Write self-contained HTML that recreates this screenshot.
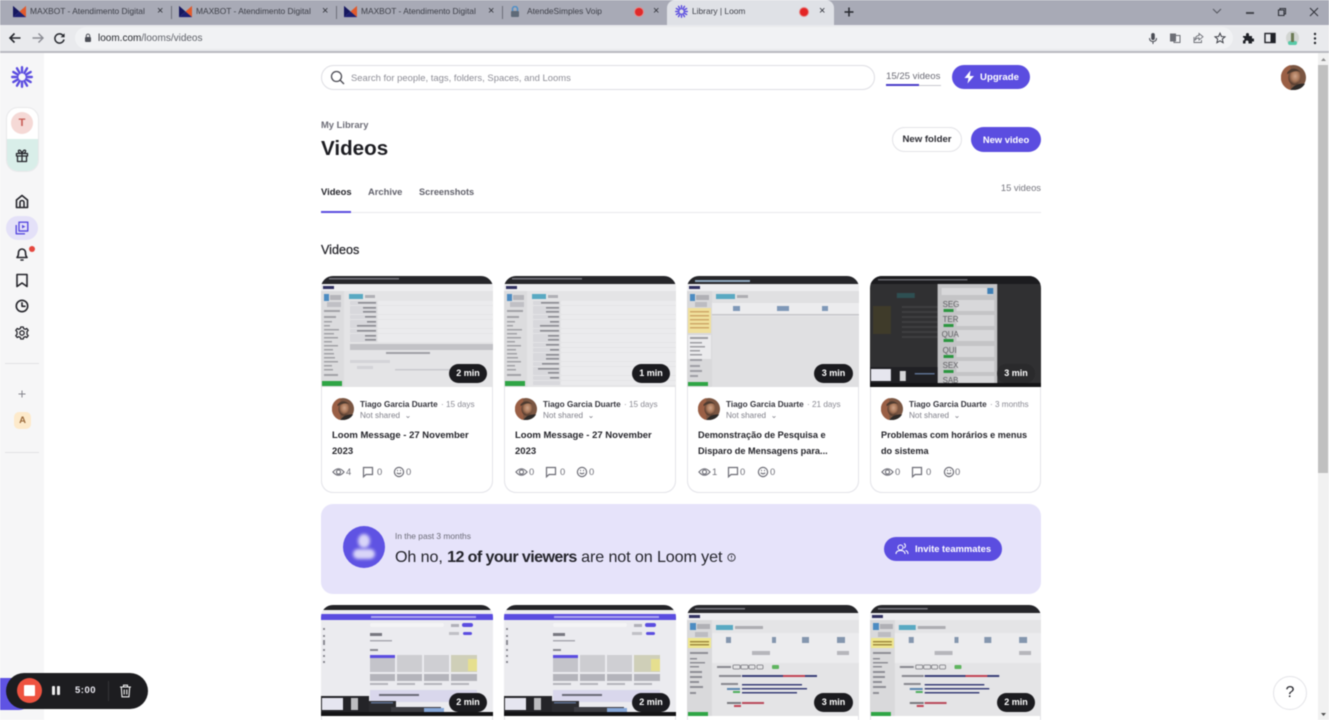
<!DOCTYPE html>
<html><head><meta charset="utf-8"><title>Library | Loom</title>
<style>
*{box-sizing:border-box}
html,body{margin:0;padding:0;width:1329px;height:720px;overflow:hidden;background:#fff;font-family:"Liberation Sans",sans-serif;color:#26262c}
#root{position:absolute;left:0;top:0;width:1329px;height:720px;overflow:hidden;background:#fff;filter:blur(.4px)}
.a{position:absolute}
.t{position:absolute;white-space:nowrap;line-height:14px}
.tab{font-size:8.4px;color:#3d3f48;top:4px}
.x{font-size:11px;color:#30323a;top:4px}
.sep{position:absolute;top:6px;width:1px;height:13px;background:#6d6f7a}
.card{position:absolute;width:172px;height:217px;border:1px solid #e3e3e8;border-radius:12px;background:#fff}
.card.r2{height:115px;border-bottom:0;border-radius:12px 12px 0 0}
.th{position:absolute;left:-1px;top:-1px;width:172px;height:111px;display:block;clip-path:inset(0 round 12px 12px 0 0)}
.dur{position:absolute;top:87px;height:19px;border-radius:10px;background:#1b1b1f;color:#fff;font-weight:bold;font-size:9px;line-height:19px;text-align:center}
.av{position:absolute;left:10px;top:121px;width:22px;height:22px}
.nm{position:absolute;left:38px;top:122px;font-size:8.2px;line-height:12px;font-weight:bold;color:#34343c;white-space:nowrap}
.nm span{font-weight:normal;color:#8a8a93;margin-left:1px}
.ns{position:absolute;left:38px;top:133px;font-size:8.2px;line-height:12px;color:#80808a;white-space:nowrap}
.ti{position:absolute;left:10px;top:151px;width:160px;font-size:9.5px;line-height:16px;font-weight:bold;color:#26262c;white-space:nowrap}
.ti.s{font-size:9.2px;top:150px}
.st{position:absolute;top:189px;font-size:9.4px;line-height:12px;color:#6d6d76}
.ic{position:absolute;top:189px;width:12px;height:12px;fill:none;stroke:#6d6d76;stroke-width:1.2}
.btn{position:absolute;border-radius:13px;background:#5b4de0;color:#fff;font-weight:bold;text-align:center}
.side{fill:none;stroke:#26262c;stroke-width:1.6;stroke-linecap:round;stroke-linejoin:round}
</style></head><body>
<svg width="0" height="0" style="position:absolute">
<defs>
<radialGradient id="fc" cx=".55" cy=".42" r=".55"><stop offset="0" stop-color="#d0a58b"/><stop offset=".55" stop-color="#a9785a"/><stop offset="1" stop-color="#5a3d30"/></radialGradient>
<symbol id="avatar" viewBox="0 0 24 24"><circle cx="12" cy="12" r="12" fill="#7b5642"/><path d="M0 12A12 12 0 0 1 9 0L9 24A12 12 0 0 1 0 12Z" fill="#9a5f45"/><ellipse cx="13" cy="12" rx="6" ry="7.5" fill="url(#fc)"/><path d="M6 7Q12 0 19 7Q14 4 6 9Z" fill="#4e3b30"/><path d="M9 24Q14 17 23 18A12 12 0 0 1 12 24Z" fill="#2e2a28"/><path d="M10 16Q13 20 16 16L15 19H11Z" fill="#5d4334"/></symbol>
<symbol id="maxbot" viewBox="0 0 14 14"><path d="M0 1L7 7 0 13Z" fill="#16185f"/><path d="M14 1L7 7 14 13Z" fill="#e25a2b"/><path d="M7 7L14 13H0Z" fill="#1d1f70"/></symbol>
<symbol id="loom" viewBox="0 0 24 24"><path stroke="#5b4de0" stroke-width="2.6" stroke-linecap="round" d="M12 1.3V7M17.5 2.5L14.5 7.7M21.5 6.5L16.3 9.5M22.7 12H17M21.5 17.5L16.3 14.5M17.5 21.5L14.5 16.3M12 22.7V17M6.5 21.5L9.5 16.3M2.5 17.5L7.7 14.5M1.3 12H7M2.5 6.5L7.7 9.5M6.5 2.5L9.5 7.7"/></symbol>
<symbol id="eye" viewBox="0 0 14 12"><path d="M1 6Q7 -1 13 6Q7 13 1 6Z"/><circle cx="7" cy="6" r="2.2"/></symbol>
<symbol id="cm" viewBox="0 0 12 12"><path d="M1.5 1.5H10.5V8.5H4L1.5 10.8Z"/></symbol>
<symbol id="sm" viewBox="0 0 12 12"><circle cx="6" cy="6" r="4.6"/><path d="M3.8 6.8Q6 8.8 8.2 6.8M4 4.5H5M7 4.5H8"/></symbol>
<symbol id="thA" viewBox="0 0 172 111" preserveAspectRatio="none">
<rect width="172" height="111" fill="#e4e4e6"/><rect width="172" height="8" fill="#26262a"/><rect x="8" y="2" width="70" height="1.5" fill="#77777e"/><rect y="8" width="172" height="7" fill="#eeeef0"/><rect x="2" y="10" width="11" height="3" fill="#303060"/>
<rect y="15" width="23" height="96" fill="#dcdcde"/><rect x="3" y="18" width="5" height="7" fill="#4d8cc2"/><rect x="9" y="19" width="11" height="5" fill="#b5b5ba"/><rect x="6" y="26" width="14" height="5" fill="#c0c0c5"/>
<g fill="#a2a2a7"><rect x="3" y="34" width="16" height="2"/><rect x="3" y="40" width="12" height="2"/><rect x="3" y="45" width="8" height="1.5"/><rect x="3" y="49" width="6" height="1.5"/><rect x="3" y="53" width="15" height="1.5"/><rect x="3" y="57" width="10" height="1.5"/><rect x="3" y="61" width="14" height="1.5"/><rect x="3" y="65" width="8" height="1.5"/><rect x="3" y="69" width="14" height="1.5"/><rect x="3" y="73" width="9" height="1.5"/><rect x="3" y="77" width="10" height="1.5"/><rect x="3" y="81" width="11" height="1.5"/><rect x="3" y="85" width="14" height="1.5"/><rect x="3" y="89" width="8" height="1.5"/><rect x="3" y="93" width="9" height="1.5"/><rect x="3" y="98" width="14" height="2"/></g>
<rect x="1" y="105" width="20" height="5" fill="#2fa545"/>
<rect x="28" y="18" width="14" height="5" fill="#59a9c2"/><rect x="44" y="19" width="10" height="3" fill="#b0b0b5"/>
<g fill="#d8d8dc"><rect x="29" y="25" width="27" height="4"/><rect x="29" y="30" width="27" height="4"/><rect x="29" y="34" width="27" height="4"/><rect x="29" y="39" width="27" height="4"/><rect x="29" y="44" width="27" height="4"/><rect x="29" y="48" width="27" height="4"/><rect x="29" y="53" width="27" height="4"/><rect x="29" y="58" width="27" height="4"/><rect x="29" y="62" width="27" height="4"/></g>
<g fill="#8c8c92"><rect x="37" y="26" width="18" height="1.6"/><rect x="42" y="31" width="13" height="1.6"/><rect x="42" y="35" width="13" height="1.6"/><rect x="44" y="40" width="11" height="1.6"/><rect x="46" y="45" width="9" height="1.6"/><rect x="36" y="49" width="19" height="1.6"/><rect x="36" y="54" width="19" height="1.6"/><rect x="44" y="59" width="11" height="1.6"/><rect x="44" y="63" width="11" height="1.6"/></g>
<g fill="#ebebed"><rect x="57" y="25" width="115" height="4"/><rect x="57" y="30" width="115" height="4"/><rect x="57" y="34" width="115" height="4"/><rect x="57" y="39" width="115" height="4"/><rect x="57" y="44" width="115" height="4"/><rect x="57" y="48" width="115" height="4"/><rect x="57" y="53" width="115" height="4"/><rect x="57" y="58" width="115" height="4"/><rect x="57" y="62" width="115" height="4"/></g>
<rect x="29" y="68" width="143" height="6" fill="#c2c2c6"/><rect x="65" y="76" width="44" height="2" fill="#a0a0a6"/><rect x="29" y="84" width="40" height="3" fill="#d4d4d8"/><rect x="36" y="90" width="16" height="3" fill="#d3d3d7"/><rect x="74" y="93" width="60" height="1.5" fill="#cacace"/>
</symbol>
<symbol id="thA2" viewBox="0 0 172 111" preserveAspectRatio="none">
<use href="#thA" width="172" height="111"/>
<rect x="23" y="67" width="149" height="44" fill="#e4e4e6"/>
<g fill="#d8d8dc"><rect x="29" y="67" width="27" height="4"/><rect x="29" y="72" width="27" height="4"/><rect x="29" y="77" width="27" height="4"/><rect x="29" y="81" width="27" height="4"/><rect x="29" y="86" width="27" height="4"/><rect x="29" y="91" width="27" height="4"/><rect x="29" y="95" width="27" height="4"/><rect x="29" y="100" width="27" height="4"/><rect x="29" y="105" width="27" height="4"/></g>
<g fill="#ebebed"><rect x="57" y="67" width="115" height="4"/><rect x="57" y="72" width="115" height="4"/><rect x="57" y="77" width="115" height="4"/><rect x="57" y="81" width="115" height="4"/><rect x="57" y="86" width="115" height="4"/><rect x="57" y="91" width="115" height="4"/><rect x="57" y="95" width="115" height="4"/><rect x="57" y="100" width="115" height="4"/><rect x="57" y="105" width="115" height="4"/></g>
<g fill="#8c8c92"><rect x="42" y="68" width="13" height="1.6"/><rect x="46" y="73" width="9" height="1.6"/><rect x="42" y="78" width="13" height="1.6"/><rect x="42" y="82" width="13" height="1.6"/><rect x="38" y="87" width="17" height="1.6"/><rect x="34" y="92" width="21" height="1.6"/><rect x="44" y="96" width="11" height="1.6"/><rect x="46" y="101" width="9" height="1.6"/></g>
</symbol>
<symbol id="thB" viewBox="0 0 172 111" preserveAspectRatio="none">
<rect width="172" height="111" fill="#e0e0e2"/><rect width="172" height="8" fill="#26262a"/><rect x="8" y="4" width="55" height="2" fill="#8fa8c0"/><rect y="8" width="172" height="7" fill="#eeeef0"/><rect x="2" y="10" width="11" height="3" fill="#303060"/>
<rect y="15" width="25" height="96" fill="#d9d9db"/><rect x="3" y="18" width="5" height="7" fill="#4d8cc2"/><rect x="9" y="19" width="13" height="5" fill="#b0b0b5"/><rect x="8" y="26" width="12" height="5" fill="#bcbcc1"/>
<rect x="1" y="32" width="23" height="25" fill="#f0e09c"/><g fill="#cfa968"><rect x="3" y="35" width="19" height="1.5"/><rect x="3" y="39" width="19" height="1.5"/><rect x="3" y="43" width="19" height="1.5"/><rect x="3" y="47" width="19" height="1.5"/><rect x="3" y="51" width="19" height="1.5"/></g>
<rect x="1" y="59" width="23" height="24" fill="#ebebed"/><g fill="#9e9ea4"><rect x="3" y="61" width="18" height="2"/><rect x="3" y="66" width="12" height="1.5"/><rect x="3" y="70" width="15" height="1.5"/><rect x="3" y="74" width="10" height="1.5"/><rect x="3" y="78" width="12" height="1.5"/><rect x="3" y="83" width="12" height="2"/><rect x="3" y="89" width="10" height="2"/><rect x="3" y="94" width="12" height="2"/><rect x="3" y="99" width="8" height="2"/></g>
<rect x="1" y="106" width="20" height="4" fill="#2fa545"/>
<rect x="29" y="18" width="19" height="5" fill="#59a9c2"/><rect x="50" y="19" width="11" height="3" fill="#adadb2"/>
<rect x="25" y="27" width="147" height="13" fill="#ececee"/><rect x="25" y="38" width="147" height="1.5" fill="#c6c6ca"/>
<g fill="#7f98b8"><rect x="46" y="30" width="7" height="5"/><rect x="90" y="30" width="12" height="5"/><rect x="135" y="30" width="6" height="5"/></g>
</symbol>
<symbol id="thC" viewBox="0 0 172 111" preserveAspectRatio="none">
<rect width="172" height="111" fill="#303032"/><rect width="172" height="8" fill="#1c1c1f"/><rect x="8" y="3" width="90" height="1.5" fill="#65656b"/>
<rect x="27" y="17" width="18" height="5" fill="#2e4f52"/>
<rect x="3" y="30" width="18" height="28" fill="#3f3b2a"/>
<g fill="#3e3e40"><rect x="32" y="30" width="36" height="2"/><rect x="32" y="35" width="36" height="2"/><rect x="32" y="40" width="36" height="2"/><rect x="32" y="45" width="36" height="2"/><rect x="32" y="50" width="36" height="2"/><rect x="32" y="55" width="36" height="2"/><rect x="32" y="60" width="36" height="2"/></g>
<rect x="68" y="8" width="60" height="103" fill="#c4c4c6"/><rect x="72" y="12" width="52" height="7" fill="#d8d8da"/><rect x="118" y="12" width="6" height="6" fill="#3f7fb5"/>
<g fill="#d8d8da"><rect x="87" y="24" width="38" height="11"/><rect x="87" y="39" width="38" height="11"/><rect x="87" y="54" width="38" height="11"/><rect x="87" y="70" width="38" height="11"/><rect x="87" y="85" width="38" height="11"/><rect x="87" y="100" width="38" height="10"/></g>
<g font-family="Liberation Sans,sans-serif" font-size="8" fill="#606064"><text x="73" y="31">SEG</text><text x="73" y="46">TER</text><text x="72" y="61">QUA</text><text x="73" y="77">QUI</text><text x="73" y="92">SEX</text><text x="73" y="107">SAB</text></g>
<g fill="#2b9640"><rect x="74" y="33" width="10" height="3"/><rect x="74" y="48" width="10" height="3"/><rect x="74" y="63" width="10" height="3"/><rect x="74" y="79" width="10" height="3"/><rect x="74" y="94" width="10" height="3"/></g>
<rect y="91" width="68" height="16" fill="#202024"/><rect x="1" y="93" width="20" height="12" fill="#e6e6ee"/><rect x="30" y="95" width="6" height="10" fill="#d6d6d8"/><rect x="45" y="97" width="20" height="1.5" fill="#5c6f90"/>
<rect y="107" width="172" height="4" fill="#141416"/>
</symbol>
<symbol id="thD" viewBox="0 0 172 111" preserveAspectRatio="none">
<rect width="172" height="111" fill="#ebebef"/><rect width="172" height="5" fill="#232327"/><rect y="5" width="172" height="4" fill="#eeeef0"/><rect y="9" width="172" height="6" fill="#5b4de0"/><rect x="50" y="11" width="105" height="2" fill="#aaa4ee"/>
<rect x="49" y="18" width="74" height="4" rx="2" fill="#f4f4f6"/><rect x="130" y="19" width="8" height="3" fill="#b0b0b8"/><rect x="141" y="18" width="11" height="4" rx="2" fill="#5b4de0"/><rect x="142" y="27" width="9" height="3" rx="1.5" fill="#5b4de0"/><rect x="128" y="27" width="10" height="3" fill="#c0c0c6"/>
<rect x="49" y="28" width="12" height="3" fill="#777780"/><rect x="49" y="35" width="22" height="1.5" fill="#aaaab2"/><rect x="49" y="44" width="8" height="2" fill="#8a8a92"/>
<g fill="#8b8b92"><rect x="2" y="23" width="2" height="2"/><rect x="2" y="30" width="2" height="2"/><rect x="2" y="35" width="2" height="5"/><rect x="2" y="44" width="2" height="2"/><rect x="2" y="50" width="2" height="2"/><rect x="2" y="56" width="2" height="2"/></g>
<rect x="49" y="50" width="25" height="17" fill="#c4c4ca"/><rect x="76" y="50" width="25" height="17" fill="#cdcdd1"/><rect x="103" y="50" width="25" height="17" fill="#cfcfd3"/><rect x="130" y="50" width="26" height="17" fill="#cfcfb8"/><rect x="49" y="50" width="25" height="3" fill="#5b4de0"/><rect x="147" y="54" width="9" height="12" fill="#e6df8f"/>
<g fill="#b4b4bb"><rect x="49" y="69" width="25" height="7"/><rect x="76" y="69" width="25" height="7"/><rect x="103" y="69" width="25" height="7"/><rect x="130" y="69" width="26" height="7"/><rect x="49" y="78" width="18" height="2"/><rect x="76" y="78" width="18" height="2"/><rect x="103" y="78" width="18" height="2"/><rect x="130" y="78" width="18" height="2"/></g>
<rect x="49" y="85" width="107" height="12" fill="#d9d7ec"/><rect x="58" y="89" width="40" height="2" fill="#6c6c78"/>
<rect y="91" width="48" height="20" fill="#242428"/><rect x="48" y="96" width="27" height="15" fill="#2b2b2f"/><rect x="1" y="93" width="21" height="12" fill="#e6e6f0"/><rect x="30" y="93" width="7" height="12" fill="#bdbdc0"/><rect x="50" y="97" width="22" height="1.5" fill="#5c6f90"/>
<rect x="70" y="102" width="50" height="6" fill="#3c3c42"/><rect x="103" y="103" width="20" height="4" fill="#86a7d8"/><rect y="107" width="172" height="4" fill="#141416"/>
</symbol>
<symbol id="thE" viewBox="0 0 172 111" preserveAspectRatio="none">
<rect width="172" height="111" fill="#e4e4e6"/><rect width="172" height="8" fill="#26262a"/><rect x="8" y="3" width="50" height="1.5" fill="#77777e"/><rect y="8" width="172" height="7" fill="#eeeef0"/><rect x="2" y="10" width="11" height="3" fill="#303060"/>
<rect y="15" width="25" height="96" fill="#d9d9db"/><rect x="3" y="18" width="6" height="7" fill="#4d8cc2"/><rect x="10" y="19" width="13" height="5" fill="#b0b0b5"/><rect x="8" y="27" width="13" height="5" fill="#bcbcc1"/><rect x="1" y="33" width="23" height="10" fill="#efe68f"/><rect x="3" y="36" width="19" height="1.5" fill="#a08c40"/><rect x="3" y="39" width="19" height="1.5" fill="#a08c40"/>
<g fill="#8e8e95"><rect x="3" y="47" width="18" height="2"/><rect x="3" y="53" width="7" height="1.5"/><rect x="3" y="57" width="15" height="1.5"/><rect x="3" y="61" width="9" height="1.5"/><rect x="3" y="66" width="12" height="2"/><rect x="3" y="71" width="12" height="2"/><rect x="3" y="76" width="9" height="2"/><rect x="3" y="81" width="13" height="2"/><rect x="3" y="87" width="6" height="2"/></g>
<rect x="1" y="107" width="20" height="4" fill="#2fa545"/>
<rect x="29" y="20" width="17" height="5" fill="#59a9c2"/><rect x="48" y="21" width="28" height="3" fill="#adadb2"/>
<rect x="25" y="28" width="147" height="30" fill="#ececee"/>
<g fill="#8496ae"><rect x="39" y="32" width="5" height="6"/><rect x="85" y="32" width="4" height="6"/><rect x="115" y="32" width="7" height="6"/><rect x="150" y="32" width="8" height="6"/></g>
<rect x="65" y="46" width="18" height="4" fill="#b6b6bb"/><rect x="150" y="46" width="12" height="4" fill="#b6b6bb"/>
<g fill="none" stroke="#77777d" stroke-width=".8"><rect x="46" y="60" width="7" height="4" rx="1"/><rect x="54" y="60" width="7" height="4" rx="1"/><rect x="62" y="60" width="6" height="4" rx="1"/><rect x="70" y="60" width="6" height="4" rx="1"/></g><rect x="85" y="60" width="7" height="4" rx="1" fill="#5fb45f"/><rect x="30" y="61" width="14" height="2" fill="#8a8a90"/>
<g fill="#3a3f78"><rect x="55" y="70" width="75" height="2"/><rect x="55" y="79" width="60" height="1.5"/><rect x="55" y="83" width="65" height="1.5"/><rect x="55" y="87" width="55" height="1.5"/></g><rect x="96" y="70" width="22" height="2" fill="#c24455"/>
<g fill="#888890"><rect x="32" y="70" width="22" height="2"/><rect x="34" y="78" width="17" height="2"/></g><rect x="40" y="83" width="13" height="2" fill="#5d86b0"/><rect x="46" y="86" width="7" height="2" fill="#4fae5e"/>
<rect x="40" y="97" width="14" height="2" fill="#7a7a80"/><rect x="47" y="100" width="7" height="2" fill="#c24455"/><rect x="55" y="97" width="22" height="2" fill="#b94a5a"/>
</symbol>
</defs></svg>

<div id="root">
<!-- Tab bar -->
<div class="a" style="left:0;top:0;width:1329px;height:25px;background:#a8aab6"></div>
<svg class="a" style="left:13px;top:5px" width="13" height="13"><use href="#maxbot"/></svg><div class="t tab" style="left:30px">MAXBOT - Atendimento Digital</div><div class="t x" style="left:157px">×</div><div class="sep" style="left:171px"></div>
<svg class="a" style="left:179px;top:5px" width="13" height="13"><use href="#maxbot"/></svg><div class="t tab" style="left:196px">MAXBOT - Atendimento Digital</div><div class="t x" style="left:322px">×</div><div class="sep" style="left:336px"></div>
<svg class="a" style="left:344px;top:5px" width="13" height="13"><use href="#maxbot"/></svg><div class="t tab" style="left:361px">MAXBOT - Atendimento Digital</div><div class="t x" style="left:488px">×</div><div class="sep" style="left:502px"></div>
<svg class="a" style="left:510px;top:6px" width="10" height="12"><rect x="1" y="5" width="8" height="6" rx="1" fill="#5e6a78"/><path d="M2.5 5V3a2.5 2.5 0 0 1 5 0V5" fill="none" stroke="#4e8fc7" stroke-width="1.5"/></svg><div class="t tab" style="left:527px">AtendeSimples Voip</div>
<div class="a" style="left:635px;top:8px;width:8px;height:8px;border-radius:50%;background:#df2a2a;box-shadow:0 0 0 1px #e68a8a"></div><div class="t x" style="left:653px">×</div>
<div class="a" style="left:667px;top:0;width:167px;height:25px;background:#dfe1e6;border-radius:8px 8px 0 0"></div>
<svg class="a" style="left:675px;top:5px" width="13" height="13"><use href="#loom"/></svg><div class="t tab" style="left:692px">Library | Loom</div>
<div class="a" style="left:800px;top:8px;width:8px;height:8px;border-radius:50%;background:#e32525;box-shadow:0 0 0 1px #e68a8a"></div><div class="t x" style="left:819px">×</div>
<svg class="a" style="left:843px;top:6px" width="12" height="12"><path d="M6 1.5V10.5M1.5 6H10.5" stroke="#26282e" stroke-width="1.5"/></svg>
<svg class="a" style="left:1212px;top:6px" width="10" height="10"><path d="M1 3L5 7 9 3" fill="none" stroke="#55575f" stroke-width="1"/></svg>
<div class="a" style="left:1246px;top:12px;width:8px;height:1.5px;background:#45474f"></div>
<svg class="a" style="left:1277px;top:7px" width="10" height="10"><path d="M1.5 3H7V8.5H1.5ZM3 3V1.5H8.5V7H7" fill="none" stroke="#30323a" stroke-width="1.1"/></svg>
<svg class="a" style="left:1309px;top:7px" width="10" height="10"><path d="M1 1L9 9M9 1L1 9" stroke="#30323a" stroke-width="1"/></svg>

<!-- Toolbar -->
<div class="a" style="left:0;top:25px;width:1329px;height:27px;background:#e9eaed"></div>
<div class="a" style="left:0;top:51px;width:1329px;height:2px;background:#b9bac0"></div>
<div class="a" style="left:75px;top:27px;width:1158px;height:22px;border-radius:11px;background:#f1f2f4"></div>
<svg class="a" style="left:8px;top:32px" width="14" height="12"><path d="M12.5 6H2M6.5 1.5L2 6 6.5 10.5" fill="none" stroke="#26282e" stroke-width="1.6"/></svg>
<svg class="a" style="left:31px;top:32px" width="14" height="12"><path d="M1.5 6H12M7.5 1.5L12 6 7.5 10.5" fill="none" stroke="#8a8c93" stroke-width="1.4"/></svg>
<svg class="a" style="left:53px;top:32px" width="13" height="13"><path d="M10.5 4.2A4.6 4.6 0 1 0 11 7.5" fill="none" stroke="#26282e" stroke-width="1.5"/><path d="M11.6 1.2V5.2H7.6Z" fill="#26282e"/></svg>
<svg class="a" style="left:84px;top:33px" width="8" height="10"><rect x="1" y="4" width="6" height="5" rx="1" fill="#4b4d55"/><path d="M2.3 4V2.8a1.7 1.7 0 0 1 3.4 0V4" fill="none" stroke="#4b4d55"/></svg>
<div class="t" style="left:98px;top:32px;font-size:10px;color:#5e6068"><span style="color:#26282e">loom.com</span>/looms/videos</div>
<svg class="a" style="left:1148px;top:32px" width="10" height="13"><rect x="3.2" y="1" width="3.6" height="7" rx="1.8" fill="#4a4c54"/><path d="M1.5 6Q1.5 9.5 5 9.5T8.5 6M5 9.5V12" fill="none" stroke="#4a4c54" stroke-width="1"/></svg>
<svg class="a" style="left:1169px;top:32px" width="12" height="12"><rect x="1" y="1.5" width="6" height="8" fill="#6d6f76"/><path d="M7 3.5H11V10.5H5V9.5" fill="none" stroke="#6d6f76"/></svg>
<svg class="a" style="left:1192px;top:32px" width="12" height="12"><path d="M2 5V10.5H9.5V8M7 1.5L11 4.8 7 8V6Q4 6 3 8.5 3.4 3.5 7 3.5Z" fill="none" stroke="#6d6f76" stroke-width=".9"/></svg>
<svg class="a" style="left:1214px;top:32px" width="12" height="12"><path d="M6 1.2L7.4 4.5 11 4.8 8.3 7.1 9.1 10.7 6 8.8 2.9 10.7 3.7 7.1 1 4.8 4.6 4.5Z" fill="none" stroke="#3f4149" stroke-width="1"/></svg>
<svg class="a" style="left:1242px;top:32px" width="12" height="12"><path d="M1 4H4V2.5a1.5 1.5 0 0 1 3 0V4H10V6.5H11a1.5 1.5 0 0 1 0 3H10V11.5H6.5V10a1.5 1.5 0 0 0-3 0V11.5H1V8.5a1.5 1.5 0 0 0 0-3Z" fill="#202228"/></svg>
<svg class="a" style="left:1264px;top:32px" width="12" height="12"><rect x="1" y="1.5" width="10" height="9" fill="none" stroke="#202228" stroke-width="1.4"/><rect x="6.5" y="1.5" width="4.5" height="9" fill="#202228"/></svg>
<div class="a" style="left:1286px;top:31px;width:13px;height:14px;border-radius:50%;background:#d2d5d2"></div><div class="a" style="left:1288px;top:41px;width:9px;height:4px;border-radius:4px;background:#58c9a7"></div><div class="a" style="left:1291px;top:33px;width:3px;height:9px;background:#6c7a55"></div>
<svg class="a" style="left:1313px;top:32px" width="4" height="13"><circle cx="2" cy="2" r="1.2" fill="#26282e"/><circle cx="2" cy="6.5" r="1.2" fill="#26282e"/><circle cx="2" cy="11" r="1.2" fill="#26282e"/></svg>

<!-- Sidebar -->
<div class="a" style="left:0;top:53px;width:44px;height:667px;background:#f6f6f7"></div>
<svg class="a" style="left:11px;top:66px" width="22" height="22"><use href="#loom"/></svg>
<div class="a" style="left:6px;top:107px;width:33px;height:65px;border-radius:12px;border:1px solid #e8e8ea;overflow:hidden;background:#fff"><div class="a" style="left:0;top:31px;width:33px;height:32px;background:#d9eee9"></div></div>
<div class="a" style="left:11px;top:112px;width:22px;height:22px;border-radius:50%;background:#f5d9d6;color:#c65b54;font-weight:bold;font-size:11px;line-height:22px;text-align:center">T</div>
<svg class="a side" style="left:15px;top:148px;stroke-width:1.3" width="14" height="15"><path d="M1.5 5.5H12.5V8H1.5ZM2.5 8V13.5H11.5V8M7 5.5V13.5M7 5.5Q3 5.5 3.5 2.5 5.5 1 7 5.5 8.5 1 10.5 2.5 11 5.5 7 5.5"/></svg>
<svg class="a side" style="left:15px;top:194px" width="14" height="15"><path d="M1.5 13.5V6L7 1.5 12.5 6V13.5ZM5 13.5V8.5A2 2 0 0 1 9 8.5V13.5"/></svg>
<div class="a" style="left:6px;top:216px;width:32px;height:24px;border-radius:12px;background:#e4e1f8"></div>
<svg class="a" style="left:15px;top:221px" width="14" height="14"><path d="M4 1.2H12.8V10H4ZM1.2 4V12.8H10" fill="none" stroke="#5b4de0" stroke-width="1.4" stroke-linejoin="round"/><path d="M7 3.8L10.4 5.6 7 7.5Z" fill="#5b4de0"/></svg>
<svg class="a side" style="left:15px;top:246px" width="14" height="16"><path d="M2 11.5Q3.5 10 3.5 6.5A3.5 3.5 0 0 1 10.5 6.5Q10.5 10 12 11.5ZM6 14H8"/></svg>
<div class="a" style="left:29px;top:246px;width:6px;height:6px;border-radius:50%;background:#e5483f"></div>
<svg class="a side" style="left:16px;top:273px" width="12" height="15"><path d="M1 1.5H11V13.5L6 10 1 13.5Z"/></svg>
<svg class="a side" style="left:15px;top:299px" width="14" height="14"><circle cx="7" cy="7" r="5.7"/><path d="M7 3.8V7.3H10"/></svg>
<svg class="a side" style="left:15px;top:326px;stroke-width:1.3" width="14" height="14"><path d="M5.8 1H8.2L8.7 2.6 10.3 3.3 11.8 2.5 13.2 4.4 12 5.6V8.4L13.2 9.6 11.8 11.5 10.3 10.7 8.7 11.4 8.2 13H5.8L5.3 11.4 3.7 10.7 2.2 11.5 .8 9.6 2 8.4V5.6L.8 4.4 2.2 2.5 3.7 3.3 5.3 2.6Z"/><circle cx="7" cy="7" r="2.2"/></svg>
<div class="a" style="left:5px;top:363px;width:34px;height:1px;background:#e2e2e5"></div>
<svg class="a" style="left:18px;top:390px" width="8" height="8"><path d="M4 .5V7.5M.5 4H7.5" stroke="#85858c" stroke-width="1"/></svg>
<div class="a" style="left:14px;top:412px;width:17px;height:17px;border-radius:5px;background:#fdeacb;color:#9b6a3a;font-weight:bold;font-size:9.5px;line-height:17px;text-align:center">A</div>
<div class="a" style="left:5px;top:452px;width:34px;height:1px;background:#e2e2e5"></div>

<!-- Scrollbar -->
<div class="a" style="left:1318px;top:53px;width:11px;height:667px;background:#f1f1f1"></div>
<div class="a" style="left:1318px;top:65px;width:10px;height:408px;background:#c0c0c0"></div>
<svg class="a" style="left:1320px;top:57px" width="7" height="5"><path d="M3.5 1L6 4H1Z" fill="#8c8c8c"/></svg>
<svg class="a" style="left:1320px;top:712px" width="7" height="5"><path d="M3.5 4L6 1H1Z" fill="#505050"/></svg>

<!-- Top -->
<div class="a" style="left:321px;top:65px;width:554px;height:25px;border:1px solid #dedee3;border-radius:12.5px"></div>
<svg class="a" style="left:330px;top:70px" width="15" height="15"><circle cx="6.5" cy="6.5" r="5" fill="none" stroke="#4c4c54" stroke-width="1.3"/><path d="M10 10L14 14" stroke="#4c4c54" stroke-width="1.3"/></svg>
<div class="t" style="left:351px;top:72px;font-size:9.45px;line-height:14px;color:#8d8d96">Search for people, tags, folders, Spaces, and Looms</div>
<div class="t" style="left:886px;top:70px;font-size:9.6px;color:#6c6c76">15/25 videos</div>
<div class="a" style="left:886px;top:85px;width:55px;height:1px;background:#c9c9cf"></div><div class="a" style="left:886px;top:84px;width:33px;height:2px;background:#4a3dc8"></div>
<div class="btn" style="left:952px;top:65px;width:78px;height:24px;border-radius:12px;font-size:9.6px;line-height:25px;padding-left:17px">Upgrade</div>
<svg class="a" style="left:963px;top:70px" width="12" height="14"><path d="M7.5 .5L1.5 8H5.5L4.5 13.5 11 6H6.8Z" fill="#fff"/></svg>
<svg class="a" style="left:1281px;top:65px" width="25" height="25"><use href="#avatar"/></svg>

<div class="t" style="left:321px;top:118px;font-size:9.4px;font-weight:bold;color:#6e6e78">My Library</div>
<div class="t" style="left:321px;top:135px;font-size:20.6px;line-height:28px;font-weight:bold;color:#1d1d22">Videos</div>
<div class="a" style="left:892px;top:127px;width:70px;height:25px;border-radius:12.5px;border:1px solid #e3e3e7;text-align:center;font-size:9.6px;line-height:23px;font-weight:bold;color:#2c2c33">New folder</div>
<div class="btn" style="left:971px;top:127px;width:70px;height:25px;border-radius:12.5px;font-size:9.4px;line-height:25px">New video</div>

<div class="t" style="left:321px;top:185px;font-size:9.4px;font-weight:bold;color:#26262c">Videos</div>
<div class="t" style="left:368px;top:185px;font-size:9.4px;font-weight:bold;color:#62626c">Archive</div>
<div class="t" style="left:419px;top:185px;font-size:9.2px;font-weight:bold;color:#62626c">Screenshots</div>
<div class="t" style="right:288px;top:181px;font-size:9.4px;color:#76767f">15 videos</div>
<div class="a" style="left:321px;top:212px;width:720px;height:1px;background:#e8e8ec"></div>
<div class="a" style="left:321px;top:211px;width:30px;height:2px;background:#5b4de0"></div>
<div class="t" style="left:321px;top:243px;font-size:12.6px;color:#26262c;-webkit-text-stroke:.25px #26262c">Videos</div>

<!-- Row 1 -->
<div class="card" style="left:321px;top:276px"><svg class="th"><use href="#thA"/></svg><div class="dur" style="left:127px;width:38px">2 min</div><svg class="av"><use href="#avatar"/></svg><div class="nm">Tiago Garcia Duarte <span>· 15 days</span></div><div class="ns">Not shared &nbsp;⌄</div><div class="ti">Loom Message - 27 November<br>2023</div><svg class="ic" style="left:10px;width:13px"><use href="#eye"/></svg><div class="st" style="left:24px">4</div><svg class="ic" style="left:40px"><use href="#cm"/></svg><div class="st" style="left:55px">0</div><svg class="ic" style="left:71px"><use href="#sm"/></svg><div class="st" style="left:84px">0</div></div>
<div class="card" style="left:504px;top:276px"><svg class="th"><use href="#thA2"/></svg><div class="dur" style="left:127px;width:38px">1 min</div><svg class="av"><use href="#avatar"/></svg><div class="nm">Tiago Garcia Duarte <span>· 15 days</span></div><div class="ns">Not shared &nbsp;⌄</div><div class="ti">Loom Message - 27 November<br>2023</div><svg class="ic" style="left:10px;width:13px"><use href="#eye"/></svg><div class="st" style="left:24px">0</div><svg class="ic" style="left:40px"><use href="#cm"/></svg><div class="st" style="left:55px">0</div><svg class="ic" style="left:71px"><use href="#sm"/></svg><div class="st" style="left:84px">0</div></div>
<div class="card" style="left:687px;top:276px"><svg class="th"><use href="#thB"/></svg><div class="dur" style="left:126px;width:39px">3 min</div><svg class="av"><use href="#avatar"/></svg><div class="nm">Tiago Garcia Duarte <span>· 21 days</span></div><div class="ns">Not shared &nbsp;⌄</div><div class="ti s">Demonstração de Pesquisa e<br>Disparo de Mensagens para...</div><svg class="ic" style="left:10px;width:13px"><use href="#eye"/></svg><div class="st" style="left:24px">1</div><svg class="ic" style="left:39px"><use href="#cm"/></svg><div class="st" style="left:52px">0</div><svg class="ic" style="left:69px"><use href="#sm"/></svg><div class="st" style="left:82px">0</div></div>
<div class="card" style="left:870px;top:276px;width:171px"><svg class="th" style="width:171px"><use href="#thC"/></svg><div class="dur" style="left:126px;width:38px;background:#2a2a2c">3 min</div><svg class="av"><use href="#avatar"/></svg><div class="nm">Tiago Garcia Duarte <span>· 3 months</span></div><div class="ns">Not shared &nbsp;⌄</div><div class="ti s" style="font-size:9.1px">Problemas com horários e menus<br>do sistema</div><svg class="ic" style="left:10px;width:13px"><use href="#eye"/></svg><div class="st" style="left:24px">0</div><svg class="ic" style="left:40px"><use href="#cm"/></svg><div class="st" style="left:55px">0</div><svg class="ic" style="left:72px"><use href="#sm"/></svg><div class="st" style="left:84px">0</div></div>

<!-- Banner -->
<div class="a" style="left:321px;top:504px;width:720px;height:90px;border-radius:12px;background:#e6e3fa"></div>
<div class="a" style="left:343px;top:526px;width:42px;height:42px;border-radius:50%;background:#5f53e3;overflow:hidden"><div class="a" style="left:15px;top:8px;width:12px;height:14px;border-radius:50%;background:#d9d5f8;filter:blur(1.5px)"></div><div class="a" style="left:10px;top:23px;width:22px;height:10px;border-radius:6px;background:#d9d5f8;filter:blur(1.5px)"></div></div>
<div class="t" style="left:395px;top:529px;font-size:8.4px;color:#6c6c78">In the past 3 months</div>
<div class="t" style="left:395px;top:547px;font-size:16.1px;line-height:20px;color:#25252c;letter-spacing:-.1px">Oh no, <b style="letter-spacing:-.6px">12 of your viewers</b> are not on Loom yet</div>
<svg class="a" style="left:727px;top:553px" width="9" height="9"><circle cx="4.5" cy="4.5" r="3.6" fill="none" stroke="#3a3a42"/><path d="M4.5 2.5V5M4.5 6V6.8" stroke="#3a3a42"/></svg>
<div class="btn" style="left:884px;top:537px;width:118px;height:24px;border-radius:12px;font-size:9.4px;line-height:24px;padding-left:20px">Invite teammates</div>
<svg class="a" style="left:895px;top:542px" width="14" height="14"><path d="M3 5.5a2.5 2.5 0 1 0 5 0 2.5 2.5 0 1 0-5 0M9 1.5A2.5 2.5 0 0 1 9 6M1 12Q1 8.5 5.5 8.5T10 12M10.5 8.5Q13 9 13 12" fill="none" stroke="#fff" stroke-width="1"/></svg>

<!-- Row 2 -->
<div class="card r2" style="left:321px;top:605px"><svg class="th"><use href="#thD"/></svg><div class="dur" style="left:127px;width:38px">2 min</div></div>
<div class="card r2" style="left:504px;top:605px"><svg class="th"><use href="#thD"/></svg><div class="dur" style="left:127px;width:38px">2 min</div></div>
<div class="card r2" style="left:687px;top:605px"><svg class="th"><use href="#thE"/></svg><div class="dur" style="left:126px;width:39px">3 min</div></div>
<div class="card r2" style="left:870px;top:605px;width:171px"><svg class="th" style="width:171px"><use href="#thE"/></svg><div class="dur" style="left:126px;width:38px">2 min</div></div>

<!-- Recorder -->
<div class="a" style="left:0;top:678px;width:33px;height:32px;background:#5f53e3;border-radius:0 14px 14px 0"></div>
<div class="a" style="left:6px;top:673px;width:142px;height:36px;border-radius:18px;background:#1d1d20"></div>
<div class="a" style="left:17px;top:678px;width:25px;height:25px;border-radius:50%;background:#ee5340"></div>
<div class="a" style="left:24px;top:685px;width:11px;height:11px;background:#fff;border-radius:1px"></div>
<div class="a" style="left:52px;top:686px;width:3px;height:9px;background:#eee;border-radius:1px"></div><div class="a" style="left:57px;top:686px;width:3px;height:9px;background:#eee;border-radius:1px"></div>
<div class="t" style="left:75px;top:684px;font-size:9.5px;font-weight:bold;color:#ecebf2;letter-spacing:.5px">5:00</div>
<div class="a" style="left:108px;top:681px;width:1px;height:20px;background:#333337"></div>
<svg class="a" style="left:119px;top:684px" width="13" height="14"><path d="M1 3H12M4.5 3V1.2H8.5V3M2.3 3L3 12.8H10L10.7 3M5.2 5.5V10.5M7.8 5.5V10.5" fill="none" stroke="#f2f2f2" stroke-width="1.1"/></svg>

<!-- Help -->
<div class="a" style="left:1273px;top:676px;width:34px;height:34px;border-radius:50%;background:#fff;border:1px solid #e4e4e8;text-align:center;font-size:16px;line-height:32px;color:#26262c">?</div>
</div>
</body></html>
